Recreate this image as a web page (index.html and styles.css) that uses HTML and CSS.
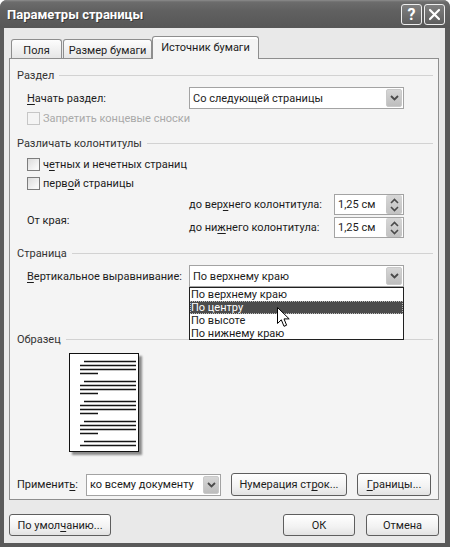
FILE: index.html
```html
<!DOCTYPE html>
<html lang="ru">
<head>
<meta charset="utf-8">
<title>Параметры страницы</title>
<link rel="stylesheet" href="styles.css">
</head>
<body>
<div class="window">
  <div class="titlebar">
    <span class="title">Параметры страницы</span>
    <div class="tb-buttons">
      <span class="tb-btn">?</span>
      <span class="tb-btn"><svg width="13" height="13" viewBox="0 0 13 13"><path d="M2 2 L11 11 M11 2 L2 11" stroke="#fff" stroke-width="2.2" stroke-linecap="round"/></svg></span>
    </div>
  </div>
  <div class="client">
    <div class="tabs">
      <div class="tab t1">Поля</div>
      <div class="tab t2">Размер бумаги</div>
      <div class="tab active">Источник бумаги</div>
    </div>
    <div class="panel">
      <div class="ghead g1"><span>Раздел</span></div>
      <div class="row r-start">
        <span class="lbl"><u>Н</u>ачать раздел:</span>
        <div class="select sel-wide">
          <span class="sel-text">Со следующей страницы</span>
          <span class="sel-btn"><svg width="9" height="6" viewBox="0 0 9 6"><path d="M1 1 L4.5 4.5 L8 1" fill="none" stroke="#4a4a4a" stroke-width="1.8"/></svg></span>
        </div>
      </div>
      <div class="check disabled c0"><span class="box"></span><span>Запретить концевые сноски</span></div>

      <div class="ghead g2"><span>Различать колонтитулы</span></div>
      <div class="check c1"><span class="box"></span><span>ч<u>е</u>тных и нечетных страниц</span></div>
      <div class="check c2"><span class="box"></span><span>перв<u>о</u>й страницы</span></div>
      <div class="edges">
        <span class="edge-lbl">От края:</span>
        <span class="e-lbl">до вер<u>х</u>него колонтитула:</span>
        <div class="spin"><span class="spin-text">1,25 см</span><span class="spin-btn"><svg width="9" height="16" viewBox="0 0 9 16"><path d="M1 6 L4.5 2.5 L8 6 M1 10 L4.5 13.5 L8 10" fill="none" stroke="#4a4a4a" stroke-width="1.6"/></svg></span></div>
        <span class="e-lbl">до ни<u>ж</u>него колонтитула:</span>
        <div class="spin"><span class="spin-text">1,25 см</span><span class="spin-btn"><svg width="9" height="16" viewBox="0 0 9 16"><path d="M1 6 L4.5 2.5 L8 6 M1 10 L4.5 13.5 L8 10" fill="none" stroke="#4a4a4a" stroke-width="1.6"/></svg></span></div>
      </div>

      <div class="ghead g3"><span>Страница</span></div>
      <div class="row r-valign">
        <span class="lbl"><u>В</u>ертикальное выравнивание:</span>
        <div class="select sel-wide has-list">
          <span class="sel-text">По верхнему краю</span>
          <span class="sel-btn"><svg width="9" height="6" viewBox="0 0 9 6"><path d="M1 1 L4.5 4.5 L8 1" fill="none" stroke="#4a4a4a" stroke-width="1.8"/></svg></span>
          <ul class="list">
            <li>По верхнему краю</li>
            <li class="hl">По центру</li>
            <li>По высоте</li>
            <li>По нижнему краю</li>
          </ul>
        </div>
      </div>

      <div class="ghead g4"><span>Образец</span></div>
      <div class="preview">
        <svg width="68" height="97" viewBox="0 0 68 97">
          <g stroke="#151515" stroke-width="1.3">
            <path d="M14 7.5 H66 M10 11.5 H66 M10 15.5 H66 M10 19.5 H28"/>
            <path d="M14 27.5 H66 M10 31.5 H66 M10 35.5 H66 M10 39.5 H28"/>
            <path d="M14 47.5 H66 M10 51.5 H66 M10 55.5 H66 M10 59.5 H28"/>
            <path d="M14 67.5 H66 M10 71.5 H66 M10 75.5 H66 M10 79.5 H28"/>
            <path d="M14 87.5 H66 M10 91.5 H66"/>
          </g>
        </svg>
      </div>

      <div class="apply">
        <span class="apply-lbl">Применит<u>ь</u>:</span>
        <div class="select sel-apply">
          <span class="sel-text">ко всему документу</span>
          <span class="sel-btn"><svg width="9" height="6" viewBox="0 0 9 6"><path d="M1 1 L4.5 4.5 L8 1" fill="none" stroke="#4a4a4a" stroke-width="1.8"/></svg></span>
        </div>
        <span class="btn b-lines">Нумерация ст<u>р</u>ок...</span>
        <span class="btn b-borders"><u>Г</u>раницы...</span>
      </div>
    </div>
    <div class="footer">
      <span class="btn b-default">По умол<u>ч</u>анию...</span>
      <span class="spacer"></span>
      <span class="btn b-ok">ОК</span>
      <span class="btn b-cancel">Отмена</span>
    </div>
  </div>
  <svg class="cursor" width="14" height="21" viewBox="0 0 14 21"><path d="M0.5 0.5 L0.5 16.5 L4.3 12.8 L7 19.3 L9.6 18.2 L7 11.9 L12.2 11.9 Z" fill="#fff" stroke="#000" stroke-width="1" stroke-linejoin="miter"/></svg>
</div>
</body>
</html>
```
FILE: styles.css
```css
* { box-sizing: border-box; }
html, body { margin: 0; padding: 0; }
body {
  width: 450px; height: 547px; background: #fff;
  font-family: Roboto, "Liberation Sans", Arial, sans-serif;
  font-size: 11px; color: #1c1c1c;
}
u { text-decoration: underline; text-underline-offset: 2px; }
.window {
  width: 450px; height: 547px; background: #5a5a5a;
  border-radius: 7px 7px 0 0; display: flex; flex-direction: column;
  position: relative; overflow: hidden;
}
.titlebar {
  height: 28px; flex: none; display: flex; align-items: center;
  justify-content: space-between; padding: 0 5px 0 7px;
  background: linear-gradient(#8c8c8c 0, #6c6c6c 2px, #606060 40%, #575757 100%);
}
.title { color: #fff; font-weight: bold; font-size: 13px; text-shadow: 1px 1px 0 #3a3a3a; }
.tb-buttons { display: flex; gap: 2px; }
.tb-btn {
  width: 21px; height: 21px; border: 1.5px solid #eee; border-radius: 3px;
  display: flex; align-items: center; justify-content: center;
  background: linear-gradient(#808080, #5e5e5e); color: #fff;
  font-weight: bold; font-size: 16px;
}
.client {
  flex: 1; margin: 0 5px 4px 4px; background: #e9e9e9;
  display: flex; flex-direction: column; padding-top: 8px;
}
.tabs { display: flex; align-items: flex-end; height: 22px; padding-left: 7px; }
.tab {
  height: 19px; border: 1px solid #8e8e8e; border-bottom: none;
  border-radius: 3px 3px 0 0; background: linear-gradient(#fdfdfd, #e6e6e6);
  display: flex; align-items: center; justify-content: center; padding-top: 2px;
}
.t1 { width: 51px; margin-right: 1px; }
.t2 { width: 89px; }
.tab.active {
  width: 107px; height: 23px; margin-bottom: -1px; position: relative; z-index: 1;
  background: #f4f4f4; border-color: #8e8e8e; padding-top: 0; padding-bottom: 1px;
  box-shadow: inset 0 2px 0 #fff;
}
.panel {
  margin-left: 5px; width: 430px; border: 1px solid #8e8e8e; background: #f4f4f4;
  padding-bottom: 3px; display: flex; flex-direction: column;
}
.ghead {
  display: flex; align-items: center; height: 14px; padding: 0 5px 0 7px; gap: 5px;
  color: #333;
}
.ghead::after { content: ""; flex: 1; border-top: 1px solid #d2d2d2; }
.g1 { margin-top: 9px; }
.g2 { margin-top: 11px; }
.g3 { margin-top: 8px; }
.g4 { margin-top: 45px; }
.row { display: flex; align-items: center; height: 22px; padding-left: 17px; margin-top: 5px; }
.lbl { width: 162px; white-space: nowrap; }
.select {
  display: flex; align-items: center; height: 22px; background: #fff;
  border: 1px solid #a3a3a3; position: relative;
}
.sel-wide { width: 215px; }
.sel-text { flex: 1; padding-left: 3px; white-space: nowrap; }
.sel-btn {
  width: 16px; height: 18px; margin-right: 1px; background: linear-gradient(#d6d6d6, #bdbdbd);
  border: 1px solid #c9c9c9; border-radius: 2px;
  display: flex; align-items: center; justify-content: center;
}
.check { display: flex; align-items: center; height: 14px; padding-left: 17px; gap: 3px; }
.box {
  width: 13px; height: 13px; border: 1px solid #7d7d7d;
  background: linear-gradient(135deg, #dcdcdc, #f8f8f8 80%);
}
.check.disabled { color: #a9a9a9; }
.check.disabled .box { border-color: #c6c6c6; background: #f4f4f4; }
.c0 { margin-top: 2px; }
.c1 { margin-top: 7px; }
.c2 { margin-top: 5px; }
.edges {
  display: grid; grid-template-columns: 162px 145px 70px; grid-template-rows: 21px 21px;
  row-gap: 2px; padding-left: 17px; margin-top: 4px; align-items: center;
}
.edge-lbl { grid-row: 1 / span 2; grid-column: 1; padding-top: 9px; }
.e-lbl { grid-column: 2; white-space: nowrap; }
.spin {
  grid-column: 3; height: 21px; border: 1px solid #a3a3a3; background: #fff;
  display: flex; align-items: center;
}
.spin-text { flex: 1; padding-left: 3px; }
.spin-btn {
  width: 16px; height: 19px; margin-right: 1px; background: linear-gradient(#d6d6d6, #c2c2c2);
  border-radius: 2px; display: flex; align-items: center; justify-content: center;
}
.list {
  position: absolute; left: -1px; top: 21px; width: 215px; height: 53px;
  margin: 0; padding: 0; list-style: none; background: #fff; border: 1px solid #202020;
  z-index: 5;
}
.list li { height: 13px; line-height: 13px; padding-left: 1px; white-space: nowrap; }
.list li.hl { background: #4c4c4c; color: #fff; outline: 1px dotted #bcbcbc; outline-offset: -1px; }
.preview {
  margin: 7px 0 0 59px; width: 70px; height: 99px; border: 1px solid #111; background: #fff;
  box-shadow: 3px 3px 2px #8a8a8a;
}
.preview svg { display: block; }
.apply { display: flex; align-items: center; height: 23px; margin-top: 21px; padding-left: 7px; }
.apply-lbl { width: 69px; }
.sel-apply { width: 135px; height: 22px; }
.btn {
  height: 23px; border: 1px solid #5e5e5e; border-radius: 3px;
  background: linear-gradient(#ffffff, #f2f2f2 60%, #e2e2e2);
  display: flex; align-items: center; justify-content: center; white-space: nowrap;
}
.b-lines { width: 116px; margin-left: 10px; }
.b-borders { width: 74px; margin-left: 10px; }
.footer { display: flex; align-items: center; margin-top: 14px; padding: 0 6px 0 5px; }
.footer .btn { height: 22px; }
.b-default { width: 102px; }
.spacer { flex: 1; }
.b-ok { width: 72px; }
.b-cancel { width: 73px; margin-left: 11px; }
.cursor { position: absolute; left: 277px; top: 307px; z-index: 10; }
```
